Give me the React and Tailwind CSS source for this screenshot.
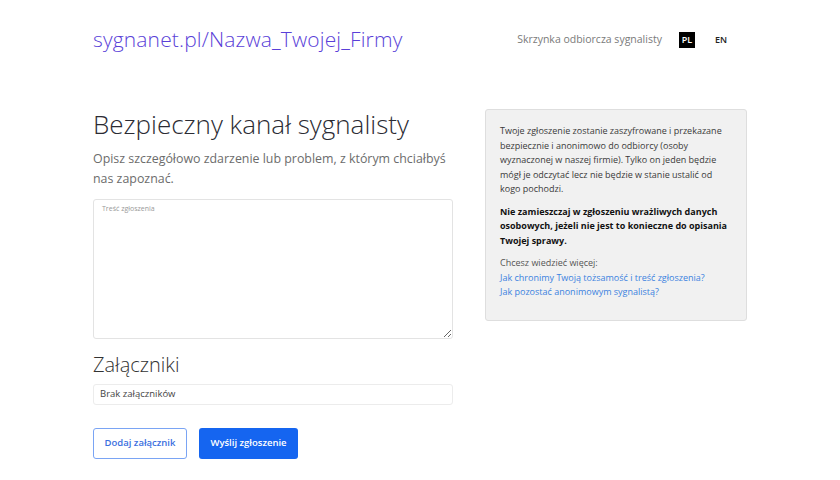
import React from "react";

const font = { fontFamily: '"Open Sans", "Noto Sans", sans-serif' };

const Header = () => (
  <header className="flex items-center justify-between pl-[93px] pr-[113px] pt-[24px] h-[56px]">
    <a className="text-[21px] font-light text-[#5a3fd8] tracking-[0.15px]">
      sygnanet.pl/Nazwa_Twojej_Firmy
    </a>
    <nav className="flex items-center">
      <span className="text-[10.5px] text-[#7a7a7a]">Skrzynka odbiorcza sygnalisty</span>
      <span className="ml-[17px] bg-black text-white font-semibold w-[16px] h-[16px] flex items-center justify-center text-[9px]">
        PL
      </span>
      <span className="ml-[20px] text-[#222] font-semibold text-[9px]">EN</span>
    </nav>
  </header>
);

const ReportForm = () => (
  <div className="w-[360px] flex flex-col">
    <h1 className="text-[26px] leading-[32px] font-light text-[#2b2b33]">
      Bezpieczny kanał sygnalisty
    </h1>
    <p className="mt-[9px] text-[12.4px] leading-[20px] text-[#6c6c6c] pr-[4px]">
      Opisz szczegółowo zdarzenie lub problem, z którym chciałbyś nas zapoznać.
    </p>
    <textarea
      placeholder="Treść zgłoszenia"
      className="mt-[10px] h-[140px] w-full border border-[#e3e3e3] rounded-[3px] px-[8px] py-[4px] text-[7px] placeholder:text-[#999] outline-none resize-y"
    />
    <h2 className="mt-[13px] text-[20px] leading-[26px] font-light text-[#333]">Załączniki</h2>
    <div className="mt-[6px] h-[21px] border border-[#ececec] rounded-[3px] px-[6px] flex items-center text-[9.5px] text-[#444]">
      Brak załączników
    </div>
    <div className="mt-[23px] flex gap-[12px]">
      <button className="h-[31px] w-[94px] border border-[#7aa4f4] rounded-[3px] text-[9.5px] font-semibold text-[#3b6fe0] bg-white">
        Dodaj załącznik
      </button>
      <button className="h-[31px] w-[99px] rounded-[3px] bg-[#1565f0] text-[9.5px] font-semibold text-white">
        Wyślij zgłoszenie
      </button>
    </div>
  </div>
);

const InfoPanel = () => (
  <aside className="w-[262px] h-[212px] mt-[1px] bg-[#f1f1f1] border border-[#dedede] rounded-[3px] pl-[14px] pr-[20px] pt-[14px] text-[9px] leading-[14.5px] text-[#3a3a3a]">
    <p>
      Twoje zgłoszenie zostanie zaszyfrowane i przekazane bezpiecznie i anonimowo do odbiorcy
      (osoby wyznaczonej w naszej firmie). Tylko on jeden będzie mógł je odczytać lecz nie będzie
      w stanie ustalić od kogo pochodzi.
    </p>
    <p className="mt-[8px] -mr-[12px] font-bold text-[#111]">
      Nie zamieszczaj w zgłoszeniu wrażliwych danych osobowych, jeżeli nie jest to konieczne do
      opisania Twojej sprawy.
    </p>
    <p className="mt-[8px] text-[#555]">Chcesz wiedzieć więcej:</p>
    <a className="block text-[#3b82e0]">Jak chronimy Twoją tożsamość i treść zgłoszenia?</a>
    <a className="block text-[#3b82e0]">Jak pozostać anonimowym sygnalistą?</a>
  </aside>
);

export default function App() {
  return (
    <div className="w-[840px] h-[480px] bg-white overflow-hidden" style={font}>
      <Header />
      <main className="flex gap-[32px] pl-[93px] pt-[52px]">
        <ReportForm />
        <InfoPanel />
      </main>
    </div>
  );
}
